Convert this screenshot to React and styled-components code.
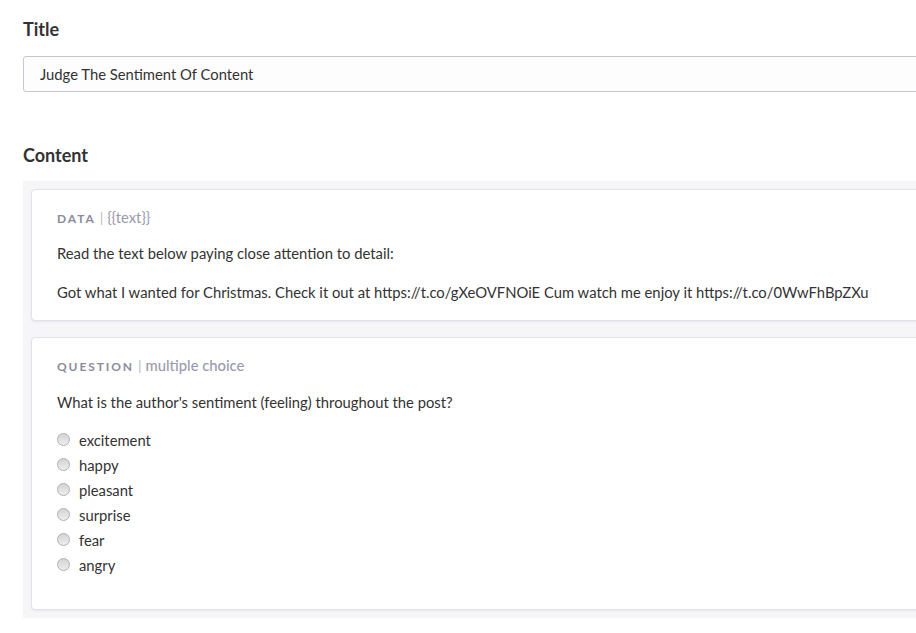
import React from "react";
import styled, { createGlobalStyle } from "styled-components";

const GlobalStyle = createGlobalStyle`
  html, body {
    margin: 0;
    padding: 0;
    background: #fff;
    overflow: hidden;
  }
  body {
    font-family: Lato, "Open Sans", sans-serif;
    color: #333;
  }
`;

const Page = styled.div`
  width: 1100px;
  padding: 18px 0 0 23px;
  box-sizing: border-box;
`;

const Heading = styled.h2`
  margin: ${({ $top }) => $top || 0} 0 0;
  font-size: 18px;
  line-height: 22px;
  font-weight: 700;
  color: #333;
`;

const TitleInput = styled.input`
  display: block;
  box-sizing: border-box;
  width: 100%;
  height: 36px;
  margin-top: 16px;
  padding: 0 16px;
  border: 1px solid #c6c6d2;
  border-radius: 3px;
  background: #fdfdfd;
  font-family: Lato, sans-serif;
  font-size: 14.8px;
  color: #333;
  outline: none;
`;

const Canvas = styled.div`
  margin-top: 15px;
  padding: 8px;
  background: #f6f6f8;
  display: flex;
  flex-direction: column;
  gap: 16px;
`;

const Card = styled.section`
  background: #fff;
  border: 1px solid #e2e2e8;
  border-radius: 4px;
  box-shadow: 0 1px 2px rgba(60, 60, 90, 0.08);
  padding: 18px 25px ${({ $bottom }) => $bottom || "18px"};
`;

const Label = styled.div`
  display: flex;
  align-items: baseline;
  gap: 4px;
  line-height: 18px;
  color: #9b9bab;
`;

const Kind = styled.span`
  font-size: 12px;
  font-weight: 700;
  letter-spacing: 1.9px;
  color: #8b8b9d;
`;

const Sep = styled.span`
  font-size: 14px;
  color: #b8b8c6;
`;

const Meta = styled.span`
  font-size: 14.8px;
  font-weight: ${({ $strong }) => ($strong ? 500 : 400)};
  color: #9a9aad;
`;

const Text = styled.p`
  margin: ${({ $top }) => $top} 0 0;
  font-size: 14.8px;
  line-height: 20px;
  color: #333;
`;

const Options = styled.div`
  margin-top: 15px;
  display: flex;
  flex-direction: column;
`;

const Option = styled.label`
  display: flex;
  align-items: center;
  gap: 9px;
  height: 25px;
  font-size: 14.8px;
  color: #333;
`;

const Radio = styled.span`
  width: 11px;
  height: 11px;
  border-radius: 50%;
  border: 1px solid #b0b0b0;
  background: linear-gradient(#d4d4d4, #ededed);
  flex-shrink: 0;
`;

const choices = ["excitement", "happy", "pleasant", "surprise", "fear", "angry"];

export default function App() {
  return (
    <>
      <GlobalStyle />
      <Page>
        <Heading>Title</Heading>
        <TitleInput defaultValue="Judge The Sentiment Of Content" readOnly />
        <Heading $top="52px">Content</Heading>
        <Canvas>
          <Card>
            <Label>
              <Kind>DATA</Kind>
              <Sep>|</Sep>
              <Meta>{"{{text}}"}</Meta>
            </Label>
            <Text $top="15px">Read the text below paying close attention to detail:</Text>
            <Text $top="19px">
              Got what I wanted for Christmas. Check it out at https://t.co/gXeOVFNOiE Cum watch me enjoy it https://t.co/0WwFhBpZXu
            </Text>
          </Card>
          <Card $bottom="32px">
            <Label>
              <Kind>QUESTION</Kind>
              <Sep>|</Sep>
              <Meta $strong>multiple choice</Meta>
            </Label>
            <Text $top="16px">What is the author's sentiment (feeling) throughout the post?</Text>
            <Options>
              {choices.map((c) => (
                <Option key={c}>
                  <Radio />
                  {c}
                </Option>
              ))}
            </Options>
          </Card>
        </Canvas>
      </Page>
    </>
  );
}
